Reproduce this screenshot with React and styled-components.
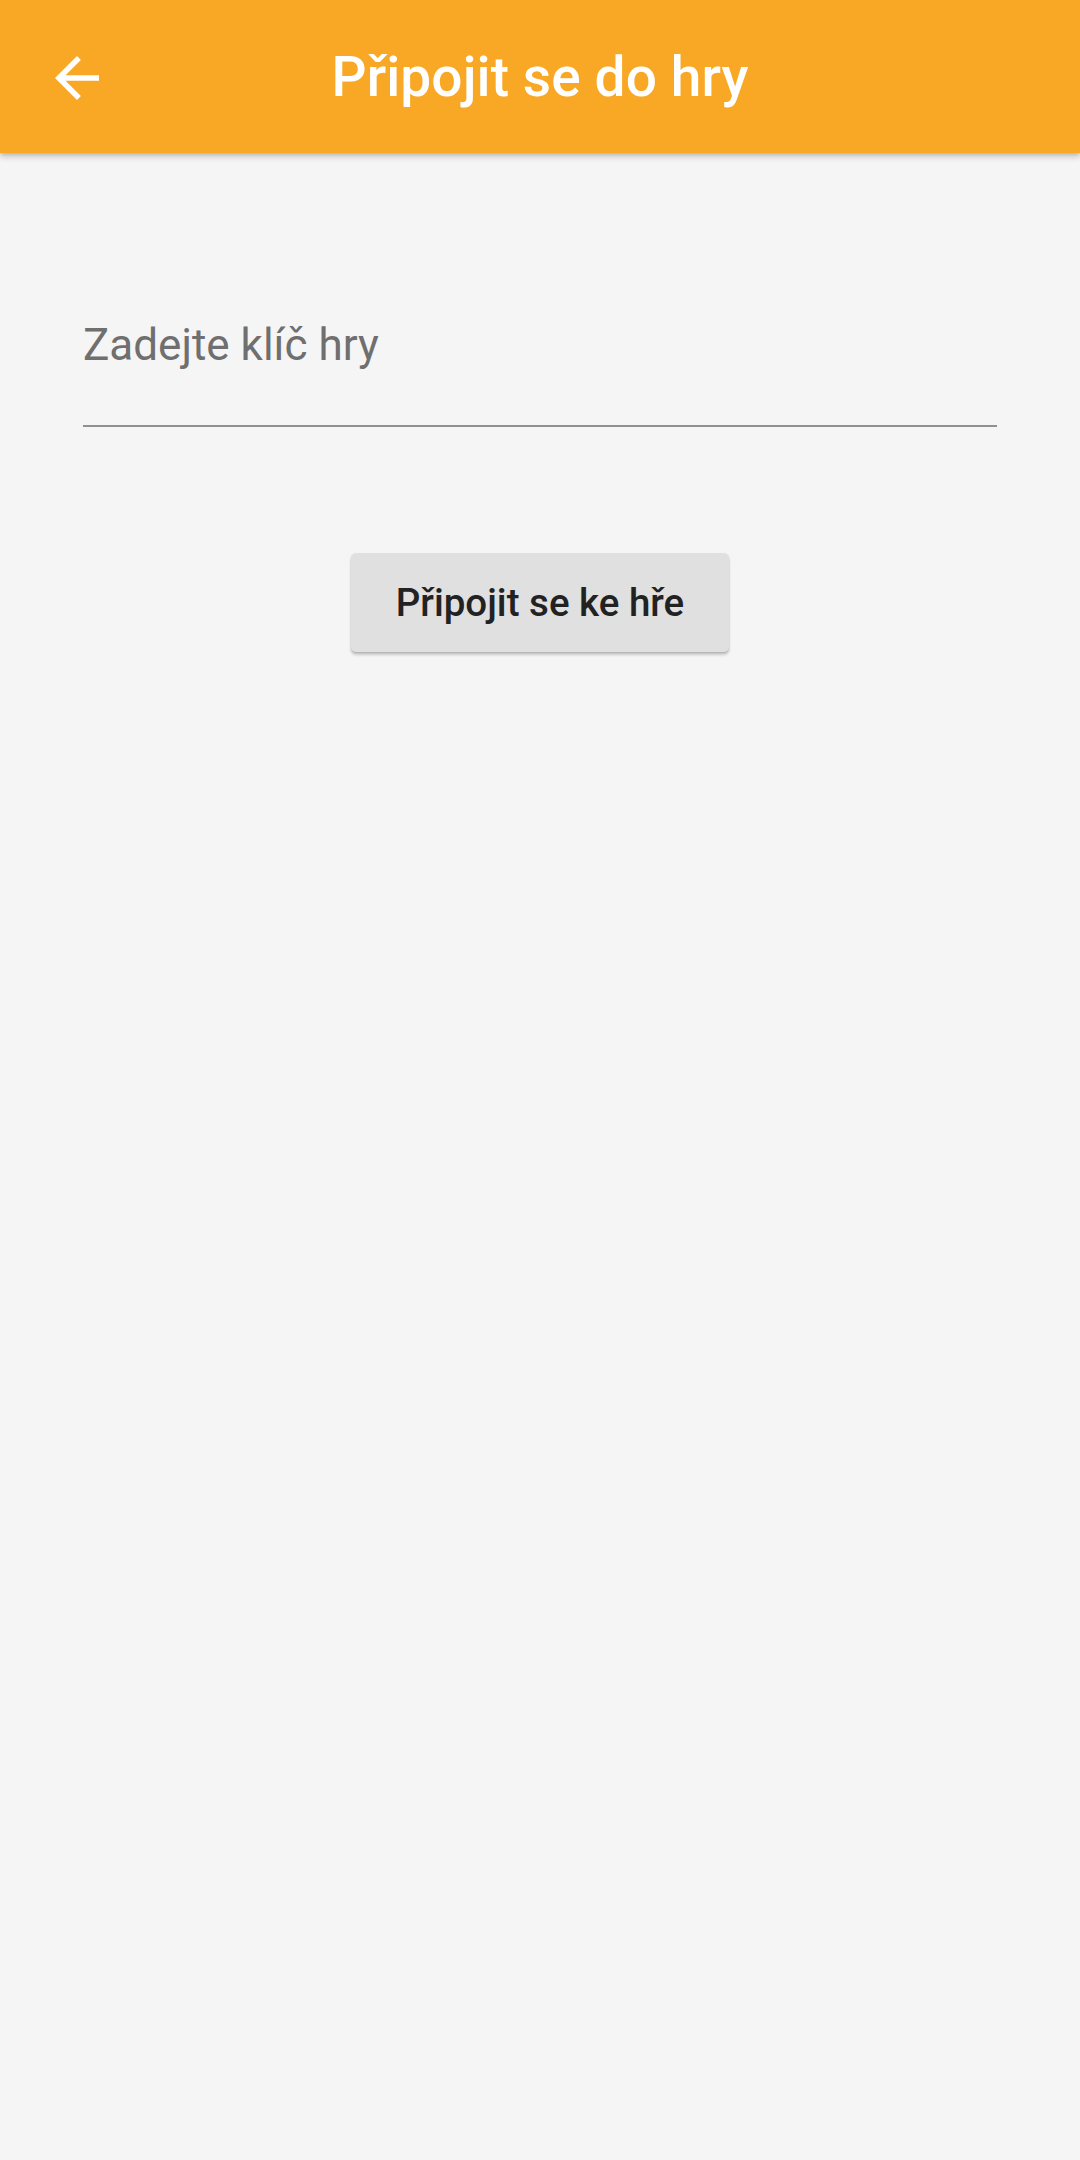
import React from "react";
import styled, { createGlobalStyle } from "styled-components";

const GlobalStyle = createGlobalStyle`
  html, body {
    margin: 0;
    padding: 0;
    background: #f5f5f5;
    font-family: Roboto, "Liberation Sans", sans-serif;
  }
  #root {
    min-height: 2160px;
  }
`;

const App = () => {
  return (
    <Page>
      <GlobalStyle />
      <AppBar>
        <BackButton aria-label="Zpět">
          <svg width="66" height="66" viewBox="0 0 24 24">
            <path fill="#fff" d="M20 11H7.83l5.59-5.59L12 4l-8 8 8 8 1.41-1.41L7.83 13H20v-2z" />
          </svg>
        </BackButton>
        <Title>Připojit se do hry</Title>
      </AppBar>

      <Content>
        <TextField>
          <Input placeholder="Zadejte klíč hry" />
        </TextField>
        <ButtonRow>
          <RaisedButton>Připojit se ke hře</RaisedButton>
        </ButtonRow>
      </Content>
    </Page>
  );
};

const Page = styled.div`
  min-height: 2160px;
  background: #f5f5f5;
`;

const AppBar = styled.header`
  position: relative;
  z-index: 2;
  height: 153px;
  background: #f9a825;
  display: flex;
  align-items: center;
  justify-content: center;
  box-shadow: 0 4px 6px rgba(0, 0, 0, 0.18), 0 1px 3px rgba(0, 0, 0, 0.12);
`;

const BackButton = styled.button`
  position: absolute;
  left: 44px;
  top: 45px;
  width: 66px;
  height: 66px;
  padding: 0;
  border: none;
  background: none;
  display: flex;
`;

const Title = styled.h1`
  margin: 0;
  color: #fff;
  font-family: Roboto, "Liberation Sans", sans-serif;
  font-weight: 500;
  font-size: 55px;
  letter-spacing: 0.1px;
`;

const Content = styled.main`
  padding: 166px 83px 0;
`;

const TextField = styled.div`
  border-bottom: 2px solid #909090;
`;

const Input = styled.input`
  display: block;
  width: 100%;
  box-sizing: border-box;
  height: 106px;
  padding: 0 0 54px;
  border: none;
  outline: none;
  background: transparent;
  font-family: Roboto, "Liberation Sans", sans-serif;
  font-size: 44px;
  line-height: 52px;
  color: #212121;

  &::placeholder {
    color: #6f6f6f;
  }
`;

const ButtonRow = styled.div`
  display: flex;
  justify-content: center;
  margin-top: 126px;
`;

const RaisedButton = styled.button`
  width: 378px;
  height: 99px;
  border: none;
  border-radius: 5px;
  background: #e0e0e0;
  color: #222;
  font-family: Roboto, "Liberation Sans", sans-serif;
  font-weight: 500;
  font-size: 38.5px;
  letter-spacing: 0;
  box-shadow: 0 3px 3px rgba(0, 0, 0, 0.18), 0 1px 2px rgba(0, 0, 0, 0.12);
`;

export default App;
